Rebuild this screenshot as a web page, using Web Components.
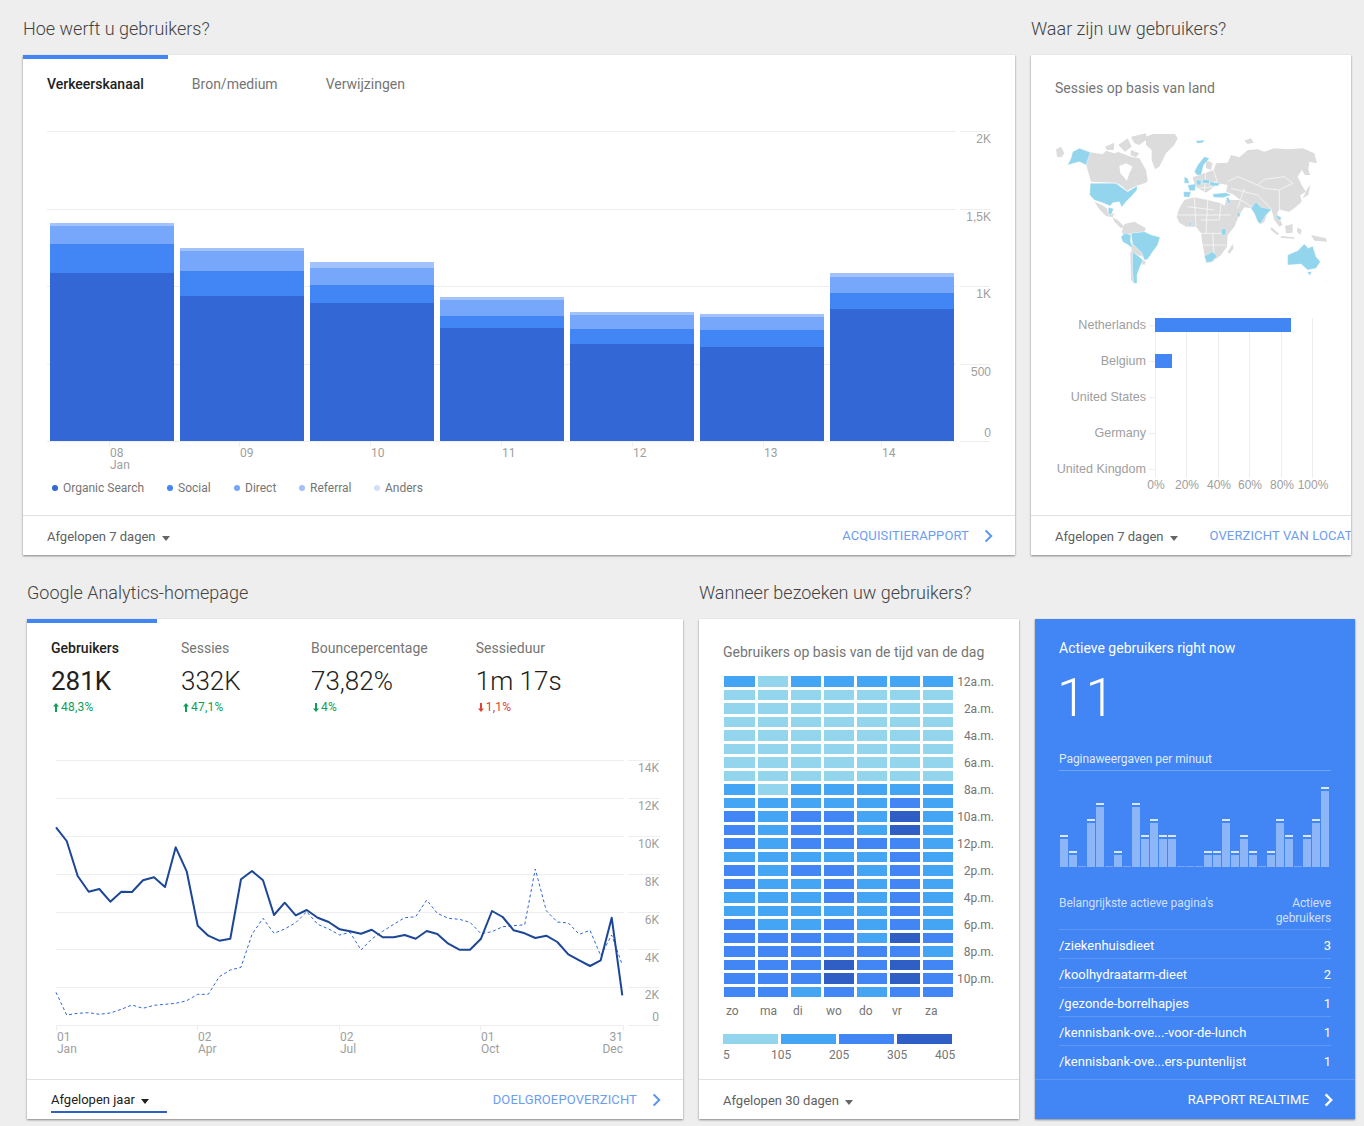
<!DOCTYPE html>
<html lang="nl">
<head>
<meta charset="utf-8">
<title>Analytics</title>
<style>
html,body{margin:0;padding:0;background:#eeeeee;font-family:Roboto,"Liberation Sans",sans-serif;color:#212121}
body{width:1364px;height:1126px;overflow:hidden}
</style>
</head>
<body>
<ga-dashboard>
  <ga-row style="--left:23px;--top:17px">
    <ga-section heading="Hoe werft u gebruikers?" style="--w:992px">
      <ga-card>
        <ga-tabs></ga-tabs>
        <ga-stacked-chart></ga-stacked-chart>
        <ga-legend></ga-legend>
        <ga-footer slot="footer" range="Afgelopen 7 dagen" link="ACQUISITIERAPPORT"></ga-footer>
      </ga-card>
    </ga-section>
    <ga-section heading="Waar zijn uw gebruikers?" style="--w:320px">
      <ga-card>
        <ga-card-title>Sessies op basis van land</ga-card-title>
        <ga-geo-map></ga-geo-map>
        <ga-country-bars></ga-country-bars>
        <ga-footer slot="footer" range="Afgelopen 7 dagen" link="OVERZICHT VAN LOCATIES"></ga-footer>
      </ga-card>
    </ga-section>
  </ga-row>
  <ga-row style="--left:27px;--top:26px">
    <ga-section heading="Google Analytics-homepage" style="--w:656px">
      <ga-card>
        <ga-metrics></ga-metrics>
        <ga-line-chart></ga-line-chart>
        <ga-footer slot="footer" range="Afgelopen jaar" link="DOELGROEPOVERZICHT" underlined></ga-footer>
      </ga-card>
    </ga-section>
    <ga-section heading="Wanneer bezoeken uw gebruikers?" style="--w:320px">
      <ga-card>
        <ga-card-title>Gebruikers op basis van de tijd van de dag</ga-card-title>
        <ga-heatmap></ga-heatmap>
        <ga-footer slot="footer" range="Afgelopen 30 dagen"></ga-footer>
      </ga-card>
    </ga-section>
    <ga-section style="--w:320px">
      <ga-realtime></ga-realtime>
    </ga-section>
  </ga-row>
</ga-dashboard>
<script>
function def(name, css, html, init){
  customElements.define(name, class extends HTMLElement{
    constructor(){super();this.attachShadow({mode:'open'});}
    connectedCallback(){
      const h = typeof html==='function' ? html(this) : html;
      this.shadowRoot.innerHTML = '<style>'+css+'</style>'+h;
      if(init) init(this,this.shadowRoot);
    }
  });
}
const CHEV = (c,w)=>`<svg width="10" height="14" viewBox="0 0 10 14"><path d="M1.6 1.4 7.2 7 1.6 12.6" fill="none" stroke="${c}" stroke-width="${w||2}"/></svg>`;

def('ga-dashboard',':host{display:block}','<slot></slot>');
def('ga-row',':host{display:flex;gap:16px;padding-left:var(--left);padding-top:var(--top);align-items:flex-end}','<slot></slot>');
def('ga-section',`:host{display:block;width:var(--w);flex:none}
 h2{margin:0 0 14px;font:300 18px/24px Roboto,sans-serif;color:#424242}`,
 el=>(el.getAttribute('heading')?`<h2>${el.getAttribute('heading')}</h2>`:'')+'<slot></slot>');
def('ga-card',`:host{display:flex;flex-direction:column;height:500px;background:#fff;box-shadow:0 1px 2px rgba(0,0,0,.45);overflow:hidden;color:#757575}
 .body{flex:1;min-height:0;display:flex;flex-direction:column}`,
 '<div class="body"><slot></slot></div><slot name="footer"></slot>');
def('ga-card-title',`:host{display:block;padding:23px 24px 0;font-size:14px;line-height:20px;color:#757575;white-space:nowrap}`,'<slot></slot>');
def('ga-footer',`:host{display:flex;flex:none;height:40px;box-sizing:border-box;border-top:1px solid #e0e0e0;align-items:center;padding:0 21px 0 24px;gap:32px;white-space:nowrap;overflow:hidden}
 .range{position:relative;flex:none;display:flex;align-items:center;gap:6px;font-size:13px;line-height:20px;color:#616161;padding-top:2px}
 .range.u::after{content:"";position:absolute;left:0;right:-18px;bottom:-3px;height:2px;background:#2f5ec4}
 .range.u{color:#212121;padding-top:0}
 .caret{width:0;height:0;border:4.5px solid transparent;border-top:5px solid #666;border-bottom:0;margin-top:3px}
 .u .caret{border-top-color:#212121}
 .link{flex:none;margin-left:auto;display:flex;align-items:center;gap:15px;font-size:13px;letter-spacing:.13px;color:#6d9df0}
 .link svg{display:block}`,
 el=>{
  const u=el.hasAttribute('underlined');
  const l=el.getAttribute('link');
  return `<div class="range ${u?'u':''}"><span>${el.getAttribute('range')}</span><i class="caret"></i></div>`+
   (l?`<div class="link"><span>${l}</span>${CHEV('#5a92f2')}</div>`:'');
 });
def('ga-tabs',`:host{display:flex;flex:none;height:60px;box-sizing:border-box}
 .t{box-sizing:border-box;height:60px;border-top:4px solid transparent;padding:15px 24px 0;font-size:14px;line-height:20px;color:#757575;white-space:nowrap}
 .t.on{border-top-color:#4285f4;color:#212121;font-weight:500}`,
 `<div class="t on">Verkeerskanaal</div><div class="t">Bron/medium</div><div class="t">Verwijzingen</div>`);

def('ga-stacked-chart',':host{display:block;flex:none;height:360px}svg{display:block}text{font-size:12px;fill:#9e9e9e}text.y{font-family:"Liberation Sans",Arial,sans-serif}',()=>{
  const G=[131,209,286,364], C=['#a1c2fa','#76a7fa','#4285f4','#3367d6'];
  const bars=[[223,226,244,273],[248,251,271,296],[262,268,285,303],[297,300,316,328],[312,315,329,344],[314,317,330,347],[273,277,293,309]];
  let s='';
  G.forEach(y=>{s+=`<path d="M47 ${y+.5}H956M960 ${y+.5}H990" stroke="#eeeeee"/>`;});
  s+=`<path d="M47 441.5H956M960 441.5H990" stroke="#eeeeee"/>`;
  bars.forEach((b,i)=>{
    const x=50+130*i;
    b.forEach((y,j)=>{const e=j<3?b[j+1]:441;s+=`<rect x="${x}" y="${y}" width="124" height="${e-y}" fill="${C[j]}"/>`;});
  });
  const X=[[110,'08'],[240,'09'],[371,'10'],[502,'11'],[633,'12'],[764,'13'],[882,'14']];
  X.forEach(([x,t])=>{s+=`<path d="M${x-.5} 441V447" stroke="#eeeeee"/><text x="${x}" y="457">${t}</text>`;});
  s+=`<text x="110" y="469">Jan</text>`;
  [['2K',143],['1,5K',221],['1K',298],['500',376],['0',437]].forEach(([t,y])=>{s+=`<text class="y" x="991" y="${y}" text-anchor="end">${t}</text>`;});
  return `<svg width="992" height="360" viewBox="23 115 992 360">${s}</svg>`;
});
def('ga-legend',`:host{display:flex;flex:none;align-items:flex-start;height:40px;box-sizing:border-box;padding:6px 0 0 29px;font-size:12px;line-height:14px;color:#757575}
 .i{display:flex;align-items:center;white-space:nowrap}
 i{width:6px;height:6px;border-radius:50%;margin-right:5px;margin-top:-1px}`,
 ()=>[['Organic Search','#3367d6',0],['Social','#4285f4',115],['Direct','#76a7fa',182],['Referral','#a1c2fa',247],['Anders','#d0e0fc',322]].reduce((a,[t,c,o],k,arr)=>{
   const w=k<arr.length-1?arr[k+1][2]-o:80;
   return a+`<div class="i" style="width:${w}px"><i style="background:${c}"></i>${t}</div>`;
 },''));

def('ga-geo-map',':host{display:block;flex:none;height:180px;margin-top:22px}svg{display:block}',()=>{
  const g='#dcdcdc',b='#93d5ed';
  const gray=[
   'M75 88 90 80 100 100 92 112 78 110Z',
   'M178 97 215 103 225 92 250 100 262 96 300 110 325 115 345 150 350 182 345 188 315 198 288 212 272 198 255 188 180 185 170 150 165 132Z',
   'M222 80 250 68 248 90 228 90Z','M262 75 290 55 302 80 282 95Z','M300 50 345 40 348 58 325 75 310 70Z','M300 90 325 100 315 112 298 105Z',
   'M345 50 365 42 432 42 440 55 430 75 405 100 385 140 372 148 362 120 362 90 345 75Z',
   'M190 245 212 255 228 265 232 285 250 280 245 292 225 288 205 268Z',
   'M245 292 260 300 280 320 270 325 250 305Z',
   'M280 312 310 305 345 325 340 335 300 340 280 350 272 335Z',
   'M300 368 332 398 335 410 320 405 302 395Z',
   'M298 395 306 395 304 450 308 488 300 480Z',
   'M336 420 345 425 340 435 332 432Z',
   'M437 290 445 265 460 240 490 232 530 240 570 250 585 260 600 295 625 285 610 320 590 345 588 380 570 405 545 425 525 428 515 375 510 340 495 320 465 320 445 308Z',
   'M605 372 608 385 595 402 590 395Z',
   'M548 150 555 130 590 128 600 105 625 112 650 90 680 88 700 95 730 85 770 88 815 85 850 100 858 130 835 125 832 150 838 165 822 165 812 150 800 170 815 200 825 215 808 225 812 245 790 265 775 275 760 272 745 268 738 280 755 315 745 320 730 300 722 270 712 270 700 305 690 312 670 280 660 265 640 262 625 285 590 300 580 262 585 240 628 240 605 222 585 215 590 195 560 190 545 180Z',
   'M485 172 548 150 550 200 525 218 500 205 490 190Z',
   'M525 120 545 130 540 150 525 145Z',
   'M830 205 838 195 832 225 815 235Z',
   'M722 322 745 342 738 345 718 328Z','M750 348 790 352 790 356 750 354Z','M762 318 785 312 785 338 765 340Z','M800 322 812 330 808 345 798 335Z','M840 345 885 355 888 365 850 362Z',
   'M888 482 892 478 880 488Z','M640 62 660 55 668 68 650 72Z'
  ];
  const blue=[
   'M125 95 145 85 178 97 165 135 145 125 110 135 120 115Z',
   'M178 190 255 190 275 205 290 215 318 198 318 210 300 230 285 245 272 262 265 245 245 248 238 258 215 248 190 240 176 225Z',
   'M232 262 248 266 240 285 232 282Z',
   'M270 350 282 340 300 345 298 362 305 385 292 375 275 365Z',
   'M300 340 340 335 362 345 387 352 380 375 365 395 350 418 340 420 332 398 305 372Z',
   'M305 395 322 408 336 420 325 445 318 465 318 490 308 490 304 450Z',
   'M520 408 545 395 558 408 542 425 527 428Z','M570 328 585 325 585 345 572 345Z','M475 305 481 305 480 318 475 318Z',
   'M495 62 520 60 515 68 498 70Z',
   'M490 155 500 135 520 110 535 115 518 135 510 165 498 165Z',
   'M460 170 470 175 475 190 460 190Z','M470 195 495 192 492 212 475 212Z','M458 215 480 215 475 232 458 230Z',
   'M495 180 510 180 510 195 497 195Z','M515 178 535 180 535 190 515 190Z','M535 185 568 190 560 198 538 197Z',
   'M545 222 585 218 600 225 575 233 548 232Z','M585 235 592 232 600 250 592 250Z','M618 280 628 276 626 290 618 290Z',
   'M660 265 675 245 690 262 722 268 705 285 695 300 688 312 680 305 670 280Z',
   'M733 285 748 290 752 298 742 300Z',
   'M770 405 800 392 820 372 832 385 845 378 855 410 868 425 855 445 830 450 810 432 770 435Z','M830 455 842 455 838 465 832 463Z'
  ];
  const borders='M490 232 495 320M530 240 525 340M570 250 565 300 510 300M440 285 600 285M470 260 550 270M510 340 585 340M515 375 585 375M545 340 550 420M590 185 620 170 680 195 700 178 760 170 785 190 745 210 700 205 680 195M600 205 680 225 722 268M630 240 668 265M640 205 620 265M745 210 745 268M500 205 548 200M520 215 525 150M548 150 560 190';
  return `<svg width="320" height="180" viewBox="0 0 960 540">
  <path d="${gray.join('')}" fill="${g}"/>
  <path d="M265 138 285 130 305 140 295 160 288 182 268 160Z" fill="#fff"/>
  <path d="${borders}" fill="none" stroke="#fff" stroke-width="2"/>
  <path d="${blue.join('')}" fill="${b}" stroke="#fff" stroke-width="1"/></svg>`;
});
def('ga-country-bars',':host{display:block;flex:none;height:215px}svg{display:block}text{font:12px "Liberation Sans",Arial,sans-serif;fill:#9e9e9e}text.n{font-size:12.55px}',()=>{
  let s='';
  [[1155,'0%'],[1186,'20%'],[1218,'40%'],[1249,'60%'],[1281,'80%'],[1312,'100%']].forEach(([x,t],i)=>{
    s+=`<path d="M${x+.5} 318V478" stroke="#eeeeee"/><text x="${i==5?1313:x+1}" y="489" text-anchor="middle">${t}</text>`;
  });
  [['Netherlands',329],['Belgium',365],['United States',401],['Germany',437],['United Kingdom',473]].forEach(([t,y])=>{
    s+=`<text class="n" x="1146" y="${y}" text-anchor="end">${t}</text><path d="M1149 ${y-3.5}H1155" stroke="#eeeeee"/>`;
  });
  s+=`<rect x="1155" y="318" width="136" height="14" fill="#4285f4"/><rect x="1155" y="354" width="17" height="14" fill="#4285f4"/>`;
  return `<svg width="320" height="215" viewBox="1031 300 320 215">${s}</svg>`;
});

def('ga-metrics',`:host{display:flex;flex:none;height:116px}
 .m{box-sizing:border-box;min-width:130px;padding:15px 24px 0;border-top:4px solid transparent;white-space:nowrap}
 .m.on{border-top-color:#4285f4}
 .l{font-size:14px;line-height:20px;color:#757575}
 .on .l{color:#212121;font-weight:500}
 .v{font-size:26px;font-weight:300;line-height:36px;color:#212121;margin-top:5px;margin-bottom:1px}
 .on .v{font-weight:400}
 .d{display:flex;align-items:center;gap:2px;font-size:12px;letter-spacing:.2px;line-height:14px}
 .d svg{display:block;margin-left:2px}`,
 ()=>[['Gebruikers','281K','48,3%',1,'#0f9d58',1],['Sessies','332K','47,1%',1,'#0f9d58',0],['Bouncepercentage','73,82%','4%',0,'#0f9d58',0],['Sessieduur','1m 17s','1,1%',0,'#db4437',0]].map(([l,v,d,up,c,on])=>{
   const a=up?'M3 0 6 3.6H4V9H2V3.6H0Z':'M2 0H4V5.4H6L3 9 0 5.4H2Z';
   return `<div class="m ${on?'on':''}"><div class="l">${l}</div><div class="v">${v}</div><div class="d" style="color:${c}"><svg width="6" height="9" viewBox="0 0 6 9"><path d="${a}" fill="${c}"/></svg><span>${d}</span></div></div>`;
 }).join(''));

def('ga-line-chart',':host{display:block;flex:none;height:344px}svg{display:block}text{font-size:12px;fill:#9e9e9e}',()=>{
  const a5=[[78,232],[110,273],[143,378],[176,425],[208,417],[241,455],[274,425],[306,426],[339,391],[372,382],[405,411],[437,292],[470,364],[503,527],[535,557],[568,572],[601,566],[633,388],[666,363],[699,391],[732,495],[764,458],[797,496],[830,480],[863,503],[896,516],[929,538]];
  const a6=[[0,544],[33,551],[65,539],[98,562],[131,562],[164,555],[197,566],[230,543],[262,552],[295,581],[328,599],[360,599],[393,566],[426,483],[458,501],[491,541],[524,550],[556,564],[589,557],[622,576],[655,613],[688,631],[720,648],[752,631],[785,503],[817,736]];
  const b5=[[78,727],[110,795],[143,790],[176,788],[208,793],[241,789],[274,778],[306,765],[339,775],[372,766],[405,763],[437,760],[470,752],[503,733],[535,733],[568,680],[601,660],[633,652],[666,553],[699,505],[732,550],[764,537],[797,518],[830,485],[863,523],[896,537],[929,555]];
  const b6=[[0,547],[33,600],[65,567],[98,544],[131,523],[164,503],[197,500],[230,450],[262,490],[295,505],[328,508],[360,517],[393,551],[426,545],[458,530],[491,527],[524,524],[556,357],[589,482],[622,516],[655,519],[688,553],[720,541],[752,617],[785,555],[817,645]];
  const pts=(p,q)=>p.map(([x,y])=>[(x/3+30).toFixed(1),(y/3+750).toFixed(1)].join(',')).concat(q.map(([x,y])=>[(x/3+350).toFixed(1),(y/3+750).toFixed(1)].join(','))).join(' ');
  let s='';
  [760,798,836,874,912,949,987].forEach(y=>{s+=`<path d="M56 ${y+.5}H624M628 ${y+.5}H660" stroke="#eeeeee"/>`;});
  s+=`<path d="M56 1025.5H624M628 1025.5H660" stroke="#eeeeee"/>`;
  [[57,'01','Jan'],[198,'02','Apr'],[340,'02','Jul'],[481,'01','Oct']].forEach(([x,d,m])=>{
    s+=`<path d="M${x-.5} 1025V1031" stroke="#eeeeee"/><text x="${x}" y="1041">${d}</text><text x="${x}" y="1053">${m}</text>`;
  });
  s+=`<path d="M623.5 1025V1031" stroke="#eeeeee"/><text x="623" y="1041" text-anchor="end">31</text><text x="623" y="1053" text-anchor="end">Dec</text>`;
  [['14K',772],['12K',810],['10K',848],['8K',886],['6K',924],['4K',962],['2K',999],['0',1021]].forEach(([t,y])=>{s+=`<text x="659" y="${y}" text-anchor="end">${t}</text>`;});
  s+=`<polyline points="${pts(b5,b6)}" fill="none" stroke="#3367d6" stroke-width="1" stroke-dasharray="3 2.5"/>`;
  s+=`<polyline points="${pts(a5,a6)}" fill="none" stroke="#1c4696" stroke-width="2" stroke-linejoin="round"/>`;
  return `<svg width="656" height="344" viewBox="27 735 656 344">${s}</svg>`;
});

def('ga-heatmap',`:host{display:block;padding:14px 0 0 24px}
 .g{display:grid;grid-template-columns:31px repeat(6,30px) 38px;column-gap:3px;grid-auto-rows:10.5px;row-gap:3px;margin-left:1px}
 .c1{background:#93d5ed}.c2{background:#45a5f5}.c3{background:#4285f4}.c4{background:#2f5ec4}
 .h{font-size:12px;line-height:11px;color:#757575;text-align:right;white-space:nowrap;position:relative;top:.5px}
 .days{display:grid;grid-template-columns:31px repeat(6,30px);column-gap:3px;margin:7px 0 0 1px;padding-left:0;font-size:12px;line-height:14px;color:#757575}
 .days span{padding-left:2px}
 .scale{display:flex;gap:3px;margin-top:16px}
 .scale i{width:55px;height:10px}
 .nums{display:flex;margin-top:4px;font-size:12px;line-height:14px;color:#757575}`,
 ()=>{
  const rows=['2122222','1111111','1111111','1111111','1111111','1111111','1111111','1111111','2122222','2222232','3233242','3233242','3233332','2222232','3233232','3223232','2223232','2222232','3223232','3333243','3333332','3334343','3334343','3323233'];
  const labels=['12a.m.','2a.m.','4a.m.','6a.m.','8a.m.','10a.m.','12p.m.','2p.m.','4p.m.','6p.m.','8p.m.','10p.m.'];
  let g='';
  rows.forEach((r,i)=>{
    [...r].forEach(c=>{g+=`<i class="c${c}"></i>`;});
    g+=`<span class="h">${i%2==0?labels[i/2]:''}</span>`;
  });
  const days=['zo','ma','di','wo','do','vr','za'].map(d=>`<span>${d}</span>`).join('');
  const scale=[1,2,3,4].map(c=>`<i class="c${c}"></i>`).join('');
  const nums=[['5',48],['105',58],['205',58],['305',48],['405',30]].map(([t,w])=>`<span style="width:${w}px;flex:none">${t}</span>`).join('');
  return `<div class="g">${g}</div><div class="days">${days}</div><div class="scale">${scale}</div><div class="nums">${nums}</div>`;
 });

def('ga-sparkbars',`:host{display:flex;align-items:flex-end;gap:1px;height:96px;padding-left:1px}
 .b{width:8px;display:flex;flex-direction:column}
 .cap{height:2px;margin-bottom:2px;background:rgba(255,255,255,.8)}
 .fill{background:rgba(255,255,255,.4)}
 .zero{height:1px;background:rgba(255,255,255,.3)}`,
 ()=>[2,1,0,3,4,0,1,0,4,2,3,2,2,0,0,0,1,1,3,1,2,1,0,1,3,2,0,2,3,5].map(v=>
   v?`<div class="b"><div class="cap"></div><div class="fill" style="height:${16*v-4}px"></div></div>`:`<div class="b"><div class="zero"></div></div>`
 ).join(''));

def('ga-realtime',`:host{display:flex;flex-direction:column;height:500px;background:#4285f4;box-shadow:0 1px 2px rgba(0,0,0,.45);color:#fff;box-sizing:border-box;overflow:hidden}
 .pad{padding:19px 24px 0}
 .t{font-size:14px;line-height:20px}
 .n{font-size:53px;font-weight:300;line-height:78px;height:78px;margin:1px 0 0 -2px;letter-spacing:-1px}
 .s{margin-top:15px;font-size:12px;letter-spacing:-.07px;line-height:14px;padding-bottom:4px;border-bottom:1px solid rgba(255,255,255,.25);color:rgba(255,255,255,.85)}
 .hd{display:flex;justify-content:space-between;margin-top:29px;font-size:12px;letter-spacing:-.07px;line-height:15px;color:rgba(255,255,255,.75);padding-bottom:3px;border-bottom:1px solid rgba(255,255,255,.15)}
 .hd div:last-child{text-align:right}
 .r{display:flex;justify-content:space-between;height:28px;line-height:32px;font-size:13px;border-bottom:1px solid rgba(255,255,255,.15)}
 .r:last-child{border-bottom:0}
 .f{margin-top:auto;height:40px;box-sizing:border-box;border-top:1px solid rgba(255,255,255,.15);display:flex;align-items:center;justify-content:flex-end;gap:15px;padding-right:21px;font-size:13px;letter-spacing:.13px}
 .f svg{display:block}`,
 ()=>{
  const rows=[['/ziekenhuisdieet',3],['/koolhydraatarm-dieet',2],['/gezonde-borrelhapjes',1],['/kennisbank-ove...-voor-de-lunch',1],['/kennisbank-ove...ers-puntenlijst',1]].map(([a,b])=>`<div class="r"><span>${a}</span><span>${b}</span></div>`).join('');
  return `<div class="pad"><div class="t">Actieve gebruikers right now</div><div class="n">11</div><div class="s">Paginaweergaven per minuut</div><ga-sparkbars></ga-sparkbars>
  <div class="hd"><div>Belangrijkste actieve pagina's</div><div>Actieve<br>gebruikers</div></div>${rows}</div>
  <div class="f"><span>RAPPORT REALTIME</span>${CHEV('#ffffff',2.4)}</div>`;
 });
</script>
</body>
</html>
